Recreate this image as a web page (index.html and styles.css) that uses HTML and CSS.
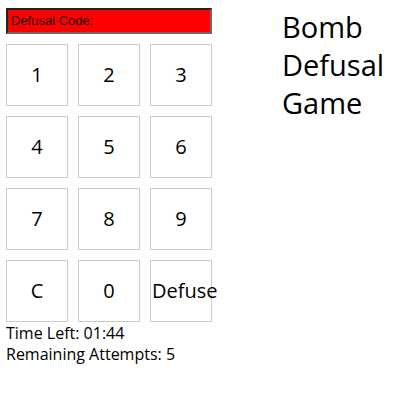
FILE: index.html
```html
<!DOCTYPE html>
<html>
<head>
<meta charset="utf-8">
<link rel="stylesheet" href="styles.css">
</head>
<body>
<div class="page">
  <div class="game">
    <div class="code">Defusal Code:</div>
    <div class="pad">
      <div class="key">1</div>
      <div class="key">2</div>
      <div class="key">3</div>
      <div class="key">4</div>
      <div class="key">5</div>
      <div class="key">6</div>
      <div class="key">7</div>
      <div class="key">8</div>
      <div class="key">9</div>
      <div class="key">C</div>
      <div class="key">0</div>
      <div class="key">Defuse</div>
    </div>
    <div class="info">Time Left: 01:44</div>
    <div class="info">Remaining Attempts: 5</div>
  </div>
  <h1 class="title">Bomb Defusal Game</h1>
</div>
</body>
</html>
```
FILE: styles.css
```css
html, body {
  margin: 0;
  padding: 0;
  background: #fff;
}
.page {
  display: flex;
  align-items: flex-start;
  gap: 70px;
  padding: 8px 6px;
  font-family: "Open Sans", "Noto Sans", sans-serif;
  color: #000;
}
.game {
  width: 208px;
  display: flex;
  flex-direction: column;
}
.code {
  box-sizing: border-box;
  height: 26px;
  background: #ff0000;
  border: 2px solid;
  border-color: #222 #6b6b6b #6b6b6b #222;
  font-family: "Liberation Sans", Arial, sans-serif;
  font-size: 13px;
  line-height: 22px;
  padding: 0 3px;
  color: #1a0000;
}
.pad {
  margin-top: 10px;
  display: grid;
  grid-template-columns: repeat(3, 62px);
  grid-auto-rows: 62px;
  gap: 10px;
}
.key {
  box-sizing: border-box;
  border: 1px solid #cccccc;
  background: #fff;
  font-size: 20px;
  line-height: 60px;
  text-align: center;
  padding: 0 1px;
  white-space: nowrap;
}
.info {
  font-size: 16px;
  line-height: 21px;
  margin-top: 1px;
}
.info + .info {
  margin-top: 0;
}
.title {
  margin: 0;
  width: 115px;
  font-size: 29px;
  line-height: 38px;
  font-weight: normal;
}
```
